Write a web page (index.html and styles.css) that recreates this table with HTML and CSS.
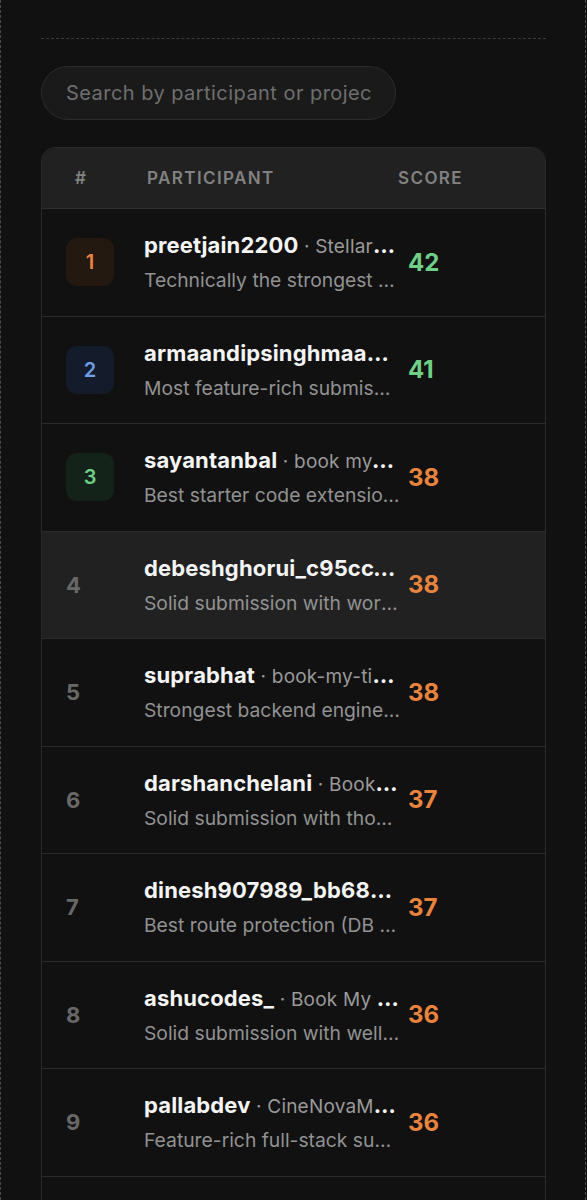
FILE: index.html
```html
<!doctype html>
<html>
<head>
    <meta charset="UTF-8">
    <meta name="viewport" content="width=device-width, initial-scale=1.0">
    <title>Leaderboard</title>
    <link rel="stylesheet" href="styles.css">
</head>
<body>
    <div class="frame">
        <div class="divider"></div>

        <input class="search" type="text" placeholder="Search by participant or project">

        <div class="board">
            <div class="board-head">
                <span>#</span>
                <span>Participant</span>
                <span>Score</span>
            </div>

            <div class="row">
                <div class="rank"><span class="badge gold">1</span></div>
                <div class="who">
                    <div class="title">preetjain2200<span class="project"> · StellarSeats</span></div>
                    <div class="desc">Technically the strongest submission overall</div>
                </div>
                <div class="score high">42</div>
            </div>

            <div class="row">
                <div class="rank"><span class="badge silver">2</span></div>
                <div class="who">
                    <div class="title">armaandipsinghmaan<span class="project"> · BookIt</span></div>
                    <div class="desc">Most feature-rich submission in the cohort</div>
                </div>
                <div class="score high">41</div>
            </div>

            <div class="row">
                <div class="rank"><span class="badge bronze">3</span></div>
                <div class="who">
                    <div class="title">sayantanbal<span class="project"> · book my-show</span></div>
                    <div class="desc">Best starter code extension with clean structure</div>
                </div>
                <div class="score">38</div>
            </div>

            <div class="row active">
                <div class="rank">4</div>
                <div class="who">
                    <div class="title">debeshghorui_c95cc1<span class="project"> · Movie Booking</span></div>
                    <div class="desc">Solid submission with working seat locking</div>
                </div>
                <div class="score">38</div>
            </div>

            <div class="row">
                <div class="rank">5</div>
                <div class="who">
                    <div class="title">suprabhat<span class="project"> · book-my-ticket</span></div>
                    <div class="desc">Strongest backend engineering of the batch</div>
                </div>
                <div class="score">38</div>
            </div>

            <div class="row">
                <div class="rank">6</div>
                <div class="who">
                    <div class="title">darshanchelani<span class="project"> · BookMyShow</span></div>
                    <div class="desc">Solid submission with thoughtful validation</div>
                </div>
                <div class="score">37</div>
            </div>

            <div class="row">
                <div class="rank">7</div>
                <div class="who">
                    <div class="title">dinesh907989_bb68f2<span class="project"> · Tix</span></div>
                    <div class="desc">Best route protection (DB backed sessions)</div>
                </div>
                <div class="score">37</div>
            </div>

            <div class="row">
                <div class="rank">8</div>
                <div class="who">
                    <div class="title">ashucodes_<span class="project"> · Book My Show</span></div>
                    <div class="desc">Solid submission with well organised routes</div>
                </div>
                <div class="score">36</div>
            </div>

            <div class="row">
                <div class="rank">9</div>
                <div class="who">
                    <div class="title">pallabdev<span class="project"> · CineNovaMovies</span></div>
                    <div class="desc">Feature-rich full-stack submission</div>
                </div>
                <div class="score">36</div>
            </div>

            <div class="row">
                <div class="rank">10</div>
                <div class="who">
                    <div class="title">rohitdas<span class="project"> · ShowTime</span></div>
                    <div class="desc">Clean and readable implementation</div>
                </div>
                <div class="score">35</div>
            </div>
        </div>
    </div>
</body>
</html>
```

FILE: styles.css
```css
body {
    margin: 0;
    background-color: #111111;
    font-family: Inter, "Noto Sans", sans-serif;
    color: #f2f2f2;
}
.frame {
    width: 586px;
    height: 1200px;
    overflow: hidden;
    padding: 38px 39px 0 40px;
    box-sizing: border-box;
    border-left: 1px dashed #4a4a4a;
    border-right: 1px dashed #4a4a4a;
    background-color: #111111;
}
.divider {
    border-top: 1px dashed #3c3c3c;
}
.search {
    display: block;
    margin-top: 27px;
    width: 355px;
    height: 54px;
    box-sizing: border-box;
    padding: 0 24px;
    border: 1px solid #2b2b2b;
    border-radius: 27px;
    background-color: #1a1a1a;
    color: #ddd;
    font-family: inherit;
    font-size: 20px;
    letter-spacing: 0.45px;
    outline: none;
}
.search::placeholder {
    color: #6f6f6f;
}
.board {
    margin-top: 27px;
    border: 1px solid #2a2a2a;
    border-radius: 14px;
    overflow: hidden;
}
.board-head {
    display: grid;
    grid-template-columns: 72px 251px auto;
    align-items: center;
    height: 60px;
    padding-left: 33px;
    background-color: #212121;
    border-bottom: 1px solid #2e2e2e;
    font-size: 17px;
    font-weight: 600;
    letter-spacing: 1.4px;
    text-transform: uppercase;
    color: #828282;
}
.row {
    display: grid;
    grid-template-columns: 78px 256px auto;
    align-items: center;
    height: 106.5px;
    padding-left: 24px;
    border-bottom: 1px solid #2a2a2a;
}
.row.active {
    background-color: #212121;
}
.rank {
    font-size: 22px;
    font-weight: 700;
    color: #686868;
}
.badge {
    display: flex;
    align-items: center;
    justify-content: center;
    width: 48px;
    height: 48px;
    border-radius: 11px;
    font-size: 20px;
    font-weight: 600;
}
.badge.gold {
    background-color: #241911;
    color: #e8843e;
}
.badge.silver {
    background-color: #141c2c;
    color: #6f9ee8;
}
.badge.bronze {
    background-color: #14231a;
    color: #6fcf86;
}
.who {
    min-width: 0;
}
.title {
    white-space: nowrap;
    overflow: hidden;
    text-overflow: ellipsis;
    font-size: 22px;
    font-weight: 700;
    letter-spacing: 0.15px;
    color: #f4f4f4;
}
.project {
    font-size: 19px;
    font-weight: 400;
    letter-spacing: 0.2px;
    color: #9a9a9a;
}
.desc {
    margin-top: 10px;
    white-space: nowrap;
    overflow: hidden;
    text-overflow: ellipsis;
    font-size: 19.3px;
    color: #929292;
}
.score {
    padding-left: 8px;
    font-size: 24px;
    font-weight: 700;
    color: #e8843e;
}
.score.high {
    color: #6fcf86;
}
```
